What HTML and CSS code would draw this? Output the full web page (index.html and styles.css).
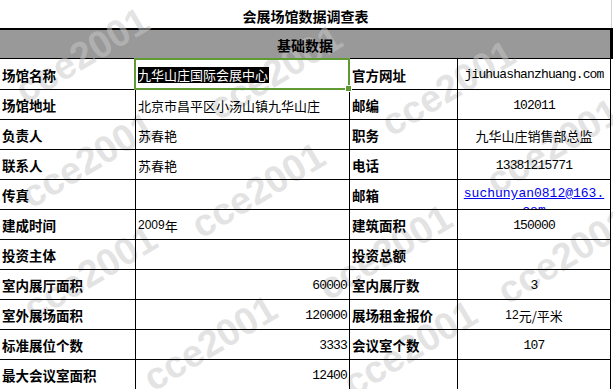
FILE: index.html
```html
<html>

<head>
  <title>会展场馆数据调查表</title>
  <meta charset="UTF-8">
  <link rel="stylesheet" href="styles.css">
</head>

<body>
  <div class="page">
    <div class="title">会展场馆数据调查表</div>

    <div class="sheet">
      <div class="band"><span>基础数据</span></div>
      <div class="grid">
        <div class="cell label">场馆名称</div>
        <div class="cell picked"><span class="hl">九华山庄国际会展中心</span></div>
        <div class="cell label">官方网址</div>
        <div class="cell mid mono">jiuhuashanzhuang.com</div>

        <div class="cell label">场馆地址</div>
        <div class="cell">北京市昌平区小汤山镇九华山庄</div>
        <div class="cell label">邮编</div>
        <div class="cell mid mono">102011</div>

        <div class="cell label">负责人</div>
        <div class="cell">苏春艳</div>
        <div class="cell label">职务</div>
        <div class="cell mid">九华山庄销售部总监</div>

        <div class="cell label">联系人</div>
        <div class="cell">苏春艳</div>
        <div class="cell label">电话</div>
        <div class="cell mid mono">13381215771</div>

        <div class="cell label">传真</div>
        <div class="cell"></div>
        <div class="cell label">邮箱</div>
        <div class="cell mail"><a href="#">suchunyan0812@163.com</a></div>

        <div class="cell label">建成时间</div>
        <div class="cell"><span class="num">2009</span>年</div>
        <div class="cell label">建筑面积</div>
        <div class="cell mid mono">150000</div>

        <div class="cell label">投资主体</div>
        <div class="cell"></div>
        <div class="cell label">投资总额</div>
        <div class="cell"></div>

        <div class="cell label">室内展厅面积</div>
        <div class="cell right mono">60000</div>
        <div class="cell label">室内展厅数</div>
        <div class="cell mid mono">3</div>

        <div class="cell label">室外展场面积</div>
        <div class="cell right mono">120000</div>
        <div class="cell label">展场租金报价</div>
        <div class="cell mid"><span class="num">12</span>元/平米</div>

        <div class="cell label">标准展位个数</div>
        <div class="cell right mono">3333</div>
        <div class="cell label">会议室个数</div>
        <div class="cell mid mono">107</div>

        <div class="cell label">最大会议室面积</div>
        <div class="cell right mono">12400</div>
        <div class="cell"></div>
        <div class="cell"></div>
      </div>
    </div>

    <!-- 水印：压在灰底上，但在文字和表格线下面 -->
    <div class="marks">
      <span class="mark m1">cce2001</span>
      <span class="mark m2">cce2001</span>
      <span class="mark m3">cce2001</span>
      <span class="mark m4">cce2001</span>
      <span class="mark m5">cce2001</span>
      <span class="mark m6">cce2001</span>
      <span class="mark m7">cce2001</span>
      <span class="mark m8">cce2001</span>
      <span class="mark m9">cce2001</span>
      <span class="mark m10">cce2001</span>
      <span class="mark m11">cce2001</span>
    </div>
  </div>
</body>

</html>
```

FILE: styles.css
```css
* {
  box-sizing: border-box;
}

body {
  margin: 0;
  background: #fff;
  color: #000;
  font-family: "Noto Sans CJK SC", "Liberation Sans", sans-serif;
  font-size: 13px;
}

.page {
  position: relative;
  width: 613px;
  height: 389px;
  overflow: hidden;
}

.title {
  position: relative;
  z-index: 2;
  height: 28px;
  width: 612px;
  padding-top: 3px;
  display: flex;
  align-items: center;
  justify-content: center;
  font-size: 14px;
  font-weight: bold;
  border-right: 1px solid #d4d4d4;
}

.sheet {
  width: 613px;
}

.band {
  height: 31px;
  border-top: 2px solid #000;
  border-right: 3px solid #000;
  border-bottom: 1px solid #000;
  background: #999;
  display: flex;
  align-items: center;
  justify-content: center;
  padding-top: 2px;
  font-size: 14px;
  font-weight: bold;
}

.band span {
  position: relative;
  z-index: 2;
}

.grid {
  display: grid;
  grid-template-columns: 136px 214px 108px 153px;
  grid-template-rows: 31px;
  grid-auto-rows: 30px;
}

.cell {
  position: relative;
  z-index: 2;
  display: flex;
  align-items: center;
  padding: 1px 2px 0;
  border-right: 1px solid #000;
  border-bottom: 1px solid #000;
  white-space: nowrap;
  overflow: hidden;
}

.label {
  font-weight: bold;
  font-size: 13.5px;
}

.mid {
  justify-content: center;
}

.right {
  justify-content: flex-end;
}

.mono {
  font-family: "Liberation Mono", monospace;
  font-size: 13px;
  letter-spacing: -0.85px;
}

.num {
  font-family: "Liberation Sans", sans-serif;
  font-size: 12px;
}

.mail {
  align-items: flex-start;
  justify-content: center;
  padding-top: 5px;
  white-space: normal;
  text-align: center;
}

.mail a {
  display: block;
  width: 144px;
  font-family: "Liberation Mono", monospace;
  font-size: 13px;
  line-height: 17px;
  color: #0000ee;
  word-break: break-all;
}

/* 选中的单元格 */
.picked {
  overflow: visible;
  z-index: 3;
}

.picked::after {
  content: "";
  position: absolute;
  left: -2px;
  top: -1px;
  right: -1px;
  bottom: -1px;
  border: 2px solid #5f9a33;
}

.picked::before {
  content: "";
  position: absolute;
  right: -3px;
  bottom: -3px;
  width: 5px;
  height: 5px;
  background: #5f9a33;
  border: 1px solid #fff;
  z-index: 1;
}

.hl {
  background: #000;
  color: #fff;
  line-height: 16px;
  padding: 0 1px 0 0;
}

.marks {
  position: absolute;
  z-index: 1;
  left: 0;
  top: 0;
  right: 0;
  bottom: 0;
  pointer-events: none;
}

.mark {
  position: absolute;
  font-family: "Liberation Sans", sans-serif;
  font-weight: bold;
  font-size: 38px;
  line-height: 1;
  color: rgba(200, 200, 200, 0.5);
  white-space: nowrap;
  transform: translate(-50%, -50%) rotate(-31deg);
}

.m1 { left: 82px; top: 55px; }
.m2 { left: 275px; top: 72px; }
.m3 { left: 448px; top: 88px; }
.m4 { left: 553px; top: 146px; }
.m5 { left: 88px; top: 160px; }
.m6 { left: 258px; top: 190px; }
.m7 { left: 564px; top: 256px; }
.m8 { left: 90px; top: 273px; }
.m9 { left: 385px; top: 252px; }
.m10 { left: 210px; top: 343px; }
.m11 { left: 410px; top: 348px; }
```
